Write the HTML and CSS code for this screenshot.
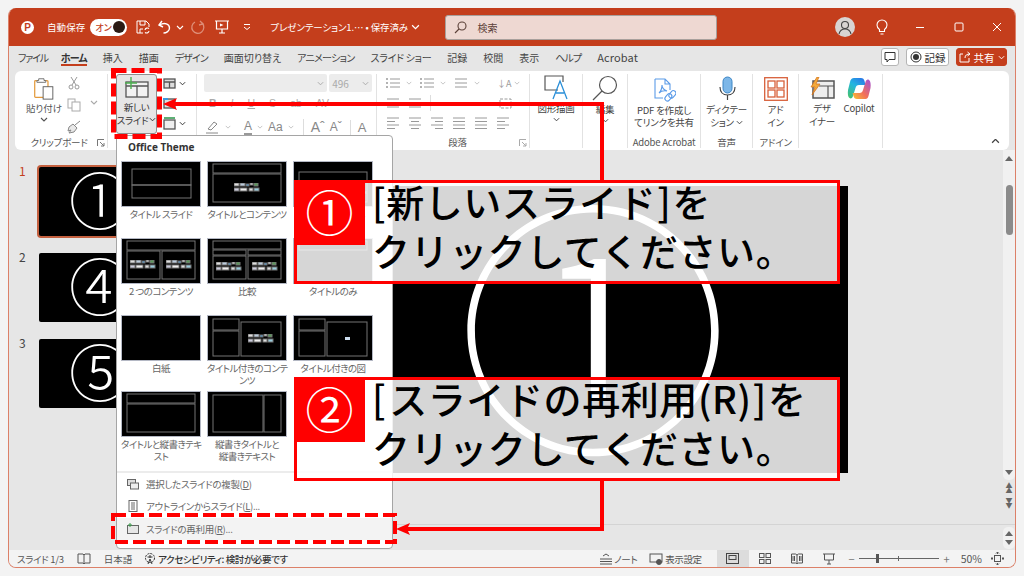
FILE: index.html
```html
<!DOCTYPE html>
<html lang="ja">
<head>
<meta charset="utf-8">
<title>PowerPoint</title>
<link rel="stylesheet" href="styles.css">
</head>
<body>
<svg class="defs" width="0" height="0" aria-hidden="true">
  <symbol id="chev" viewBox="0 0 8 5"><path d="M1 1l3 3 3-3" fill="none" stroke="currentColor" stroke-width="1.1"/></symbol>
  <symbol id="ci" viewBox="0 0 26 9">
    <rect x="0" y="0" width="5" height="3" fill="#ddd"/><rect x="6" y="0" width="5" height="3" fill="#bcd"/><rect x="12" y="1" width="3" height="2" fill="#4a9ad8"/><rect x="16" y="0" width="3" height="2" fill="#e8e8e8"/><rect x="20" y="0" width="4" height="3" fill="#5a9a5a"/>
    <rect x="0" y="5" width="5" height="3" fill="#ccd"/><rect x="6" y="5" width="7" height="3" fill="#eee"/><rect x="15" y="5" width="4" height="3" fill="#ddd"/><rect x="20" y="5" width="5" height="3" fill="#9cd"/>
  </symbol>
  <symbol id="lines" viewBox="0 0 14 14"><path d="M1 3h12M1 7h12M1 11h12" stroke="currentColor" fill="none"/></symbol>
  <symbol id="bullets" viewBox="0 0 14 14"><path d="M4 3h10M4 7h10M4 11h10" stroke="currentColor" fill="none"/><path d="M0 3h2M0 7h2M0 11h2" stroke="currentColor" stroke-width="1.6" fill="none"/></symbol>
  <symbol id="left" viewBox="0 0 14 14"><path d="M1 2h12M1 5.5h8M1 9h12M1 12.5h8" stroke="currentColor" fill="none"/></symbol>
  <symbol id="center" viewBox="0 0 14 14"><path d="M1 2h12M3 5.5h8M1 9h12M3 12.5h8" stroke="currentColor" fill="none"/></symbol>
  <symbol id="right" viewBox="0 0 14 14"><path d="M1 2h12M5 5.5h8M1 9h12M5 12.5h8" stroke="currentColor" fill="none"/></symbol>
  <symbol id="justify" viewBox="0 0 14 14"><path d="M1 2h12M1 5.5h12M1 9h12M1 12.5h12" stroke="currentColor" fill="none"/></symbol>
</svg>

<div class="window">
  <header class="titlebar">
    <span class="logo">P</span>
    <span class="autosave">自動保存</span>
    <span class="toggle"><span class="toggle-text">オン</span><span class="toggle-dot"></span></span>
    <svg class="ti save" width="16" height="16" viewBox="0 0 16 16" fill="none" stroke="#fff"><path d="M8 14H2V2h9l3 3v3"/><path d="M5 2v4h5V2M5 14v-4h3"/><path d="M10 11a2.500 2.500 0 0 1 4-1.500M14 12a2.500 2.500 0 0 1-4 1.500" stroke-width="1.100"/></svg>
    <svg class="ti undo" width="16" height="16" viewBox="0 0 16 16" fill="none" stroke="#fff" stroke-width="1.4"><path d="M5 2L2 6l4 2"/><path d="M2.500 6c5-3 10-1 10 3 0 3-3 5-6 5"/></svg>
    <svg class="ti qc" width="8" height="5"><use href="#chev"/></svg>
    <svg class="ti redo" width="16" height="16" viewBox="0 0 16 16" fill="none" stroke="#de8e78" stroke-width="1.3"><path d="M10 2l3 3-4 1"/><path d="M12 4A6 6 0 1 1 5 3"/></svg>
    <svg class="ti present" width="16" height="16" viewBox="0 0 16 16" fill="none" stroke="#fff" stroke-width="1.2"><path d="M1 2h14M2.500 2v8h11V2M8 10v4M5 14h6"/><path d="M6 4.500l3.500 1.500L6 7.500z" fill="#fff" stroke="none"/></svg>
    <svg class="ti more" width="8" height="6" viewBox="0 0 8 6" fill="none" stroke="#fff"><path d="M1 .5h6M1 3l3 2.500L7 3"/></svg>
    <span class="doc">プレゼンテーション1.… • 保存済み <svg width="9" height="6" class="doc-chev"><use href="#chev"/></svg></span>
    <div class="search">
      <svg width="13" height="13" viewBox="0 0 13 13" fill="none" stroke="#5b4038" stroke-width="1.1"><circle cx="8" cy="5" r="4"/><path d="M5 8l-4 4"/></svg>
      <span>検索</span>
    </div>
    <div class="win-right">
      <span class="avatar"><svg width="20" height="20" viewBox="0 0 20 20" fill="none" stroke="#444" stroke-width="1.1"><circle cx="10" cy="8" r="3.500"/><path d="M4 17c1-4 3-5 6-5s5 1 6 5"/></svg></span>
      <svg class="bulb" width="14" height="16" viewBox="0 0 14 16" fill="none" stroke="#fff" stroke-width="1.1"><path d="M4.500 10.500C3 9.500 2 8 2 6a5 5 0 0 1 10 0c0 2-1 3.500-2.500 4.500v2h-5z"/><path d="M5.500 15h3"/></svg>
      <svg class="w min" width="10" height="10" viewBox="0 0 10 10" stroke="#fff"><path d="M1 5.500h8"/></svg>
      <svg class="w max" width="10" height="10" viewBox="0 0 10 10" stroke="#fff" fill="none"><rect x="1" y="1" width="8" height="8" rx="1"/></svg>
      <svg class="w close" width="10" height="10" viewBox="0 0 10 10" stroke="#fff"><path d="M1 1l8 8M9 1l-8 8"/></svg>
    </div>
  </header>

  <nav class="tabs">
    <span class="tab k">ファイル</span><span class="tab k active">ホーム</span><span class="tab">挿入</span><span class="tab">描画</span><span class="tab k">デザイン</span><span class="tab s">画面切り替え</span><span class="tab k2">アニメーション</span><span class="tab k2">スライド ショー</span><span class="tab">記録</span><span class="tab">校閲</span><span class="tab">表示</span><span class="tab k">ヘルプ</span><span class="tab latin">Acrobat</span>
    <div class="tab-actions">
      <span class="tbtn comment"><svg width="12" height="12" viewBox="0 0 12 12" fill="none" stroke="#333"><path d="M1 1.500h10v7H5L3 11V8.500H1z"/></svg></span>
      <span class="tbtn rec"><svg width="12" height="12" viewBox="0 0 12 12"><circle cx="6" cy="6" r="5" fill="none" stroke="#333"/><circle cx="6" cy="6" r="3" fill="#333"/></svg>記録</span>
      <span class="tbtn share"><svg width="12" height="12" viewBox="0 0 12 12" fill="none" stroke="#fff"><path d="M4 3H1v8h9V7M6 7c0-3 2-4 5-4M8.500 1L11 3 8.500 5"/></svg>共有<svg width="7" height="5"><use href="#chev"/></svg></span>
    </div>
  </nav>

  <section class="ribbon">
    <div class="group g-clip">
      <div class="g-body clip-body">
        <div class="paste">
          <svg width="22" height="23" viewBox="0 0 24 26" fill="none"><rect x="1.500" y="4" width="15" height="19" rx="1" fill="#fff" stroke="#e39a3c" stroke-width="1.400"/><path d="M6 4V2h6v2h2v2H4V4z" fill="#fff" stroke="#666"/><rect x="11" y="11" width="11" height="14" fill="#fff" stroke="#555"/></svg>
          <span>貼り付け</span>
          <svg class="gc" width="8" height="5"><use href="#chev"/></svg>
        </div>
        <div class="clip-tools">
          <svg width="12" height="14" viewBox="0 0 12 14" fill="none" stroke="#999"><path d="M3 1l5 8M9 1L4 9"/><circle cx="3" cy="11" r="2"/><circle cx="9" cy="11" r="2"/></svg>
          <svg width="14" height="14" viewBox="0 0 14 14" fill="none" stroke="#aaa"><rect x="1" y="1" width="7" height="9"/><rect x="5" y="4" width="8" height="9" fill="#fff"/></svg>
          <svg width="14" height="14" viewBox="0 0 14 14" fill="#e8e8e8" stroke="#888"><path d="M13 1L8 5M2 7l4-3 4 4-3 4-5 1 2-3-3 1z"/></svg>
        </div>
        <svg class="clip-c" width="8" height="5"><use href="#chev"/></svg>
      </div>
      <div class="g-label">クリップボード<svg class="launch" width="8" height="8" viewBox="0 0 8 8" fill="none" stroke="#777"><path d="M.5 7V.5H7M3 3l4 4M7 4v3H4"/></svg></div>
    </div>

    <div class="group g-slides">
      <div class="newslide">
        <svg width="25" height="21" viewBox="0 0 25 21" fill="none"><rect x="2" y="5" width="22" height="15" fill="#f2f2f2" stroke="#555" stroke-width="1.300"/><path d="M2 9h22M13 9v11" stroke="#555" stroke-width="1.300"/><path d="M7 0v12M1 6h12" stroke="#4caf50" stroke-width="1.400"/></svg>
        <span>新しい</span>
        <span>スライド <svg width="7" height="5"><use href="#chev"/></svg></span>
      </div>
      <div class="slide-tools">
        <span><svg width="13" height="13" viewBox="0 0 13 13" fill="#ddd" stroke="#555" stroke-width="1.300"><rect x="1" y="2" width="11" height="9"/><path d="M6.500 5v6M1 5h11"/></svg><svg width="7" height="5"><use href="#chev"/></svg></span>
        <span><svg width="13" height="13" viewBox="0 0 13 13" fill="#ddd" stroke="#555" stroke-width="1.300"><rect x="1" y="2" width="11" height="9"/><path d="M0 2h5" stroke="#3d9ae0" stroke-width="2"/></svg></span>
        <span><svg width="13" height="13" viewBox="0 0 13 13" fill="#eee" stroke="#555" stroke-width="1.300"><rect x="1" y="3" width="11" height="9"/><path d="M1 1h11" stroke="#5db075" stroke-width="2"/></svg><svg width="7" height="5"><use href="#chev"/></svg></span>
      </div>
    </div>

    <div class="group g-font">
      <div class="g-body font-body">
        <div class="f-row"><span class="fld f1"><svg width="7" height="5"><use href="#chev"/></svg></span><span class="fld f2">496<svg width="7" height="5"><use href="#chev"/></svg></span></div>
        <div class="f-row fmt"><b>B</b><i>I</i><u>U</u><span>S</span><span>ab</span><span>AV</span></div>
        <div class="f-row tools">
          <svg width="15" height="14" viewBox="0 0 15 14" fill="none" stroke="#888"><path d="M3 9l6-7 3 2-6 6zM1 13h12"/></svg>
          <svg class="sc" width="6" height="4"><use href="#chev"/></svg>
          <span class="a-line">A</span>
          <svg class="sc" width="6" height="4"><use href="#chev"/></svg>
          <span>Aa</span>
          <svg class="sc" width="6" height="4"><use href="#chev"/></svg>
          <span class="bigA">Aˆ</span><span>Aˇ</span><span class="clr">A</span>
        </div>
      </div>
    </div>

    <div class="group g-para">
      <div class="g-body para-body">
        <div class="p-row r1">
          <svg width="14" height="14"><use href="#bullets"/></svg><svg class="pc" width="6" height="4"><use href="#chev"/></svg>
          <svg width="14" height="14"><use href="#bullets"/></svg><svg class="pc" width="6" height="4"><use href="#chev"/></svg>
          <svg width="14" height="14"><use href="#lines"/></svg><svg class="pc" width="6" height="4"><use href="#chev"/></svg>
          <span class="p-txt">↓A</span><svg class="pc" width="6" height="4"><use href="#chev"/></svg>
        </div>
        <div class="p-row r2">
          <svg width="14" height="14"><use href="#lines"/></svg><svg width="14" height="14"><use href="#lines"/></svg>
          <span class="p-div"></span>
          <svg class="p-box" width="13" height="13" viewBox="0 0 13 13" fill="none" stroke="currentColor" stroke-dasharray="3 1.500"><rect x="1" y="2" width="11" height="9"/></svg>
        </div>
        <div class="p-row r3">
          <svg width="14" height="14"><use href="#left"/></svg><svg width="14" height="14"><use href="#center"/></svg><svg width="14" height="14"><use href="#right"/></svg><svg width="14" height="14"><use href="#justify"/></svg><svg width="14" height="14"><use href="#justify"/></svg><svg width="14" height="14"><use href="#left"/></svg>
        </div>
      </div>
      <div class="g-label">段落<svg class="launch" width="8" height="8" viewBox="0 0 8 8" fill="none" stroke="#aaa"><path d="M.5 7V.5H7M3 3l4 4M7 4v3H4"/></svg></div>
    </div>

    <div class="group big g-draw">
      <svg width="24" height="25" viewBox="0 0 24 25" fill="none"><path d="M14 15H1V1h18v6" stroke="#555" stroke-width="1.200"/><path d="M9 24L16 6l7 18M12 18h8" stroke="#2a8fd8" stroke-width="1.300"/></svg>
      <span class="bt">図形描画</span>
      <svg class="bc" width="7" height="5"><use href="#chev"/></svg>
    </div>
    <div class="group big g-edit">
      <svg width="26" height="26" viewBox="0 0 26 26" fill="none" stroke="#555" stroke-width="1.200"><circle cx="16" cy="10" r="8.500"/><path d="M10 16L1 25"/></svg>
      <span class="bt">編集</span>
      <svg class="bc" width="7" height="5"><use href="#chev"/></svg>
    </div>
    <div class="group big g-acro">
      <svg width="24" height="26" viewBox="0 0 24 26" fill="none" stroke="#5b9be8" stroke-width="1.100"><path d="M3 1h10l5 5v6M3 1v19h8M13 1v5h5"/><path d="M7 15c2-2 3-5 3-8 0 3 2 5 5 6-3-.5-6 0-8 2z"/><rect x="14" y="15" width="5" height="8" rx="2.500" transform="rotate(40 16 19)"/><rect x="18" y="12" width="5" height="8" rx="2.500" transform="rotate(40 20 16)"/></svg>
      <span class="bt two acro-t">PDF を作成し<br>てリンクを共有</span>
      <span class="g-label">Adobe Acrobat</span>
    </div>
    <div class="group big g-voice">
      <svg width="18" height="25" viewBox="0 0 18 25" fill="none"><rect x="5" y="1" width="9" height="16" rx="4.500" fill="#7db7e8" stroke="#3d86c6"/><path d="M2 11c0 5 3 8 7.500 8S17 16 17 11M9.500 19v5" stroke="#444" stroke-width="1.200"/></svg>
      <span class="bt two">ディクテー<br>ション <svg class="in" width="7" height="5"><use href="#chev"/></svg></span>
      <span class="g-label">音声</span>
    </div>
    <div class="group big g-addin">
      <svg width="24" height="24" viewBox="0 0 24 24" fill="none" stroke="#d8603a" stroke-width="1.300"><rect x=".7" y=".7" width="22.600" height="22.600"/><rect x="4" y="4" width="7" height="7"/><rect x="13" y="4" width="7" height="7"/><rect x="4" y="13" width="7" height="7"/><rect x="13" y="13" width="7" height="7"/></svg>
      <span class="bt two">アド<br>イン</span>
      <span class="g-label">アドイン</span>
    </div>
    <div class="group g-ai">
      <div class="big ai-item">
        <svg width="25" height="23" viewBox="0 0 25 23" fill="none"><rect x="3" y="4" width="21" height="17" fill="#eee" stroke="#555" stroke-width="1.500"/><path d="M9 9h15M18 9v12" stroke="#555" stroke-width="1.200"/><path d="M7 0L1 10h4l-3 8 8-11H6l3-7z" fill="#f2a93b" stroke="#d3701b" stroke-width=".7"/></svg>
        <span class="bt two">デザ<br>イナー</span>
      </div>
      <div class="big ai-item cop">
        <svg width="24" height="23" viewBox="0 0 24 23">
          <defs>
            <linearGradient id="cg1" x1=".7" y1="0" x2=".1" y2="1"><stop offset="0" stop-color="#2a7de8"/><stop offset=".4" stop-color="#22b6e0"/><stop offset="1" stop-color="#45c26a"/></linearGradient>
            <linearGradient id="cg2" x1="0" y1="1" x2="1" y2="0"><stop offset="0" stop-color="#f5c52e"/><stop offset=".45" stop-color="#f2705a"/><stop offset="1" stop-color="#a24fd8"/></linearGradient>
          </defs>
          <path d="M7 1h7c2 0 3 1 3.500 3l1 4H12c-2 0-3 1-3.500 3L6 19c-.5 2-2 3-3.500 2C1 20 .5 17 1 13L3 5c.5-2.500 2-4 4-4z" fill="url(#cg1)"/>
          <path d="M17 22h-7c-2 0-3-1-3.500-3l-1-3h7c2 0 3-1 3.500-3l2.500-8c.5-2 2-3 3.500-2 1.500 1 2 4 1.500 8l-2 8c-.5 2.500-2 3-4 3z" fill="url(#cg2)"/>
        </svg>
        <span class="bt">Copilot</span>
      </div>
    </div>
    <svg class="collapse" width="9" height="6"><use href="#chev" transform="matrix(1 0 0 -1 0 5)"/></svg>
  </section>

  <main class="work">
    <aside class="rail">
      <div class="t-row sel"><span class="t-num">1</span><div class="thumb"><span class="glyph">①</span></div></div>
      <div class="t-row"><span class="t-num">2</span><div class="thumb"><span class="glyph">④</span></div></div>
      <div class="t-row"><span class="t-num">3</span><div class="thumb"><span class="glyph">⑤</span></div></div>
    </aside>
    <div class="center">
      <div class="editor">
        <div class="slide"><span class="slide-glyph">①</span></div>
        <div class="vscroll">
          <div class="track">
            <span class="tri up"></span>
            <span class="vthumb"></span>
            <span class="tri down"></span>
          </div>
          <div class="pager"><span class="dbl">▲<br>▲</span><span class="dbl">▼<br>▼</span></div>
        </div>
      </div>
      <div class="notes">
        <div class="mini"><span class="tri up"></span><span class="tri down"></span></div>
      </div>
    </div>
  </main>

  <footer class="status">
    <span class="st-count">スライド 1/3</span>
    <svg class="st-book" width="14" height="12" viewBox="0 0 14 12" fill="none" stroke="#555"><path d="M1 1h5l1 1 1-1h5v9H8l-1 1-1-1H1zM7 2v9"/></svg>
    <span class="st-lang">日本語</span>
    <svg class="st-acc" width="14" height="14" viewBox="0 0 14 14" fill="none" stroke="#333"><circle cx="7" cy="6" r="4.500" stroke-dasharray="2 1"/><path d="M7 3v3M4.500 5h5M5 12l2-5 2 5"/></svg>
    <span class="st-a11y">アクセシビリティ: 検討が必要です</span>
    <div class="st-right">
      <span class="st-item"><svg width="14" height="12" viewBox="0 0 14 12" fill="none" stroke="#555"><path d="M4 3l3-2 3 2M1 6h12M1 8.500h12M1 11h12"/></svg>ノート</span>
      <span class="st-item st-disp"><svg width="15" height="12" viewBox="0 0 15 12" fill="none" stroke="#555"><rect x="1" y="1" width="12" height="8"/><circle cx="10" cy="9" r="2.500" fill="#555"/></svg>表示設定</span>
      <span class="view on"><svg width="13" height="11" viewBox="0 0 13 11" fill="none" stroke="#444"><rect x=".5" y=".5" width="12" height="10"/><rect x="3" y="2.500" width="7" height="4"/></svg></span>
      <span class="view"><svg width="12" height="11" viewBox="0 0 12 11" fill="none" stroke="#555"><rect x=".5" y=".5" width="4.500" height="4"/><rect x="7" y=".5" width="4.500" height="4"/><rect x=".5" y="6.500" width="4.500" height="4"/><rect x="7" y="6.500" width="4.500" height="4"/></svg></span>
      <span class="view"><svg width="12" height="11" viewBox="0 0 12 11" fill="none" stroke="#555"><path d="M.5 1h4l1.500 1 1.500-1h4v9h-4L6 11l-1.500-1h-4zM6 2v9M2 3v5M3.500 3v5M8.500 3v5M10 3v5"/></svg></span>
      <span class="view"><svg width="12" height="12" viewBox="0 0 12 12" fill="none" stroke="#555"><path d="M0 1h12M1.500 1v6h9V1M6 7v4M4 11h4"/></svg></span>
      <span class="zm">−</span>
      <span class="zslider"><span class="zthumb"></span><span class="ztick"></span></span>
      <span class="zm">+</span>
      <span class="zpct">50%</span>
      <svg class="zfit" width="13" height="13" viewBox="0 0 13 13" fill="none" stroke="#555"><rect x="3.500" y="3.500" width="6" height="6"/><path d="M6.500 0v2M5 1.500L6.500 0 8 1.500M6.500 13v-2M5 11.500L6.500 13 8 11.500M0 6.500h2M1.500 5L0 6.500 1.500 8M13 6.500h-2M11.500 5L13 6.500 11.500 8"/></svg>
    </div>
  </footer>
</div>

<div class="menu">
  <div class="menu-title">Office Theme</div>
  <div class="gallery">
    <figure><svg viewBox="0 0 80 46"><rect x="11" y="8" width="59" height="16"/><rect x="11" y="24" width="59" height="13"/></svg><figcaption>タイトル スライド</figcaption></figure>
    <figure><svg viewBox="0 0 80 46"><rect x="6" y="3" width="68" height="9"/><rect x="6" y="13" width="68" height="28"/><use href="#ci" x="27" y="22" width="26" height="9"/></svg><figcaption>タイトルとコンテンツ</figcaption></figure>
    <figure><svg viewBox="0 0 80 46"><rect x="6" y="11" width="68" height="20"/><rect x="6" y="32" width="68" height="9"/></svg><figcaption>セクション見出し</figcaption></figure>
    <figure><svg viewBox="0 0 80 46"><rect x="6" y="3" width="68" height="9"/><rect x="6" y="13" width="33" height="28"/><rect x="41" y="13" width="33" height="28"/><use href="#ci" x="9" y="22" width="26" height="9"/><use href="#ci" x="45" y="22" width="26" height="9"/></svg><figcaption>2 つのコンテンツ</figcaption></figure>
    <figure><svg viewBox="0 0 80 46"><rect x="6" y="3" width="68" height="8"/><rect x="6" y="12" width="33" height="5"/><rect x="41" y="12" width="33" height="5"/><rect x="6" y="18" width="33" height="23"/><rect x="41" y="18" width="33" height="23"/><use href="#ci" x="9" y="24" width="26" height="9"/><use href="#ci" x="45" y="24" width="26" height="9"/></svg><figcaption>比較</figcaption></figure>
    <figure><svg viewBox="0 0 80 46"><rect x="6" y="3" width="68" height="9"/></svg><figcaption>タイトルのみ</figcaption></figure>
    <figure><svg viewBox="0 0 80 46"></svg><figcaption>白紙</figcaption></figure>
    <figure><svg viewBox="0 0 80 46"><rect x="6" y="4" width="26" height="11"/><rect x="6" y="16" width="26" height="25"/><rect x="34" y="7" width="40" height="34"/><use href="#ci" x="41" y="19" width="26" height="9"/></svg><figcaption>タイトル付きのコンテ<br>ンツ</figcaption></figure>
    <figure><svg viewBox="0 0 80 46"><rect x="6" y="4" width="26" height="11"/><rect x="6" y="16" width="26" height="25"/><rect x="34" y="7" width="40" height="34"/><rect x="52" y="22" width="5" height="3" fill="#cde" stroke="none"/></svg><figcaption>タイトル付きの図</figcaption></figure>
    <figure><svg viewBox="0 0 80 46"><rect x="6" y="3" width="68" height="9"/><rect x="6" y="13" width="68" height="28"/></svg><figcaption>タイトルと縦書きテキ<br>スト</figcaption></figure>
    <figure><svg viewBox="0 0 80 46"><rect x="6" y="4" width="50" height="37"/><rect x="57" y="4" width="17" height="37"/></svg><figcaption>縦書きタイトルと<br>縦書きテキスト</figcaption></figure>
  </div>
  <div class="menu-items">
    <div class="mi"><svg width="12" height="11" viewBox="0 0 12 11" fill="none" stroke="#666"><rect x=".5" y=".5" width="8" height="6" fill="#ddd"/><rect x="3.500" y="4" width="8" height="6" fill="#eee"/></svg><span>選択したスライドの複製(<u>D</u>)</span></div>
    <div class="mi"><svg width="12" height="12" viewBox="0 0 12 12" fill="none" stroke="#666"><rect x="2" y=".5" width="8" height="11"/><path d="M4 3h4M4 5h4M4 7h4M4 9h4"/></svg><span>アウトラインからスライド(<u>L</u>)...</span></div>
    <div class="mi hot"><svg width="12" height="11" viewBox="0 0 12 11" fill="none" stroke="#666"><rect x=".5" y="2.500" width="11" height="8" fill="#e6e6e6"/><path d="M3 0v4M1 2h4" stroke="#3a9a4a"/></svg><span>スライドの再利用(<u>R</u>)...</span></div>
  </div>
</div>

<svg class="arrows" width="1024" height="576" viewBox="0 0 1024 576" fill="none">
  <rect class="dashrect thick" x="113.500" y="70.500" width="46" height="66"/>
  <rect class="dashrect" x="113" y="515" width="282" height="27"/>
  <path d="M174 104H602V181" stroke="#f00" stroke-width="4"/>
  <path d="M602 480V529H406" stroke="#f00" stroke-width="4"/>
  <path d="M163 104l14-6-3 6 3 6z" fill="#f00"/>
  <path d="M396 529l14-6-3 6 3 6z" fill="#f00"/>
</svg>

<div class="callout c1">
  <span class="c-num">①</span>
  <p>[新しいスライド<span class="rb">]</span>を<br>クリックしてください。</p>
</div>
<div class="callout c2">
  <span class="c-num">②</span>
  <p>[<span class="lb">スライドの再利用(R)</span><span class="rb">]</span>を<br>クリックしてください。</p>
</div>
</body>
</html>
```
FILE: styles.css
```css
* { box-sizing: border-box; }
html, body { margin: 0; padding: 0; }
body {
  position: relative;
  width: 1024px;
  height: 576px;
  overflow: hidden;
  background: #f3f3f3;
  font-family: "Noto Sans CJK JP", "Noto Sans", sans-serif;
  font-feature-settings: "palt";
  font-size: 10px;
  color: #444;
}
svg { display: block; flex: none; }
svg.in { display: inline-block; vertical-align: 1px; }
.defs { position: absolute; }

.window {
  margin: 8px;
  width: 1008px;
  height: 560px;
  display: flex;
  flex-direction: column;
  background: #e6e6e6;
  border: 1px solid #dc8068;
  border-top: 0;
  border-radius: 8px;
  overflow: hidden;
}

/* title bar */
.titlebar {
  height: 38px;
  flex: none;
  margin: 0 -1px;
  background: #c43e1c;
  display: flex;
  align-items: center;
  color: #fff;
  padding-left: 13px;
}
.logo {
  width: 13px; height: 13px; border-radius: 50%;
  background: #fff; color: #c43e1c;
  font: 700 10px/13px "Liberation Sans", sans-serif;
  text-align: center;
}
.autosave { margin-left: 13px; font-size: 9.500px; letter-spacing: .1px; }
.toggle {
  margin-left: 5px; width: 37px; height: 17px; border-radius: 9px;
  background: #fff; display: flex; align-items: center; justify-content: space-between;
  padding: 0 2px 0 5px; color: #c43e1c; font-size: 9px; font-weight: 500;
}
.toggle-dot { width: 12px; height: 12px; border-radius: 50%; background: #2b1a14; }
.ti.save { margin-left: 8px; }
.ti.undo { margin-left: 6px; }
.ti.qc { margin-left: 3px; color: #fff; }
.ti.redo { margin-left: 6px; }
.ti.present { margin-left: 8px; }
.ti.more { margin-left: 13px; }
.doc { margin-left: 19px; width: 150px; font-size: 9.500px; letter-spacing: -.1px; display: flex; align-items: center; justify-content: space-between; white-space: pre; }
.doc-chev { color: #fff; }
.search {
  margin-left: 25px;
  width: 272px; height: 25px;
  background: #eed8d2;
  border: 1px solid #a8a09c;
  border-radius: 3px;
  display: flex; align-items: center; gap: 10px;
  padding-left: 8px;
  color: #5b4038;
  font-size: 10px;
}
.win-right { margin-left: auto; display: flex; align-items: center; padding-right: 14px; }
.avatar { width: 20px; height: 20px; border-radius: 50%; background: #d8d4d2; }
.bulb { margin-left: 20px; }
.w.min { margin-left: 26px; }
.w.max { margin-left: 29px; }
.w.close { margin-left: 28px; }

/* tabs */
.tabs {
  height: 24px; flex: none;
  display: flex; align-items: center; gap: 16px;
  padding: 0 8px 2px 9px;
  font-size: 10px; color: #444; white-space: pre;
}
.tab.k { letter-spacing: -.9px; }
.tab.k2 { letter-spacing: -.7px; }
.tab.k2 + .tab.k2 { letter-spacing: -.3px; }
.tab.s { letter-spacing: 0; }
.tab:first-child { margin-right: -3px; letter-spacing: -1.2px; }
.tab.latin { font-size: 11px; letter-spacing: .1px; }
.tab.active { position: relative; font-weight: 700; color: #333; }
.tab.active::after {
  content: ""; position: absolute; left: 0; right: 0; bottom: -1px;
  height: 2px; background: #c43e1c;
}
.tab-actions { margin-left: auto; display: flex; gap: 7px; }
.tbtn {
  height: 18px; display: flex; align-items: center; justify-content: center; gap: 3px;
  background: #fff; border: 1px solid #b5b5b5; border-radius: 3px; font-size: 10.5px; color: #333;
}
.comment { width: 18px; }
.rec { width: 43px; }
.share { width: 51px; background: #c43e1c; border-color: #c43e1c; color: #fff; }

/* ribbon */
.ribbon {
  height: 79px; flex: none;
  margin: 1px 6px 0;
  background: #fff;
  border-radius: 6px;
  display: flex;
  position: relative;
}
.group {
  margin: 3px 0 2px;
  border-right: 1px solid #e2e2e2;
  display: flex;
  flex-direction: column;
  position: relative;
  color: #555;
}
.g-body { flex: 1; }
.g-label { font-size: 9.5px; line-height: 12px; text-align: center; color: #555; white-space: nowrap; letter-spacing: -.2px; }
.launch { position: absolute; right: 2px; bottom: 1px; }

.g-clip { width: 93px; }
.clip-body { display: flex; padding-left: 11px; position: relative; }
.paste { width: 36px; display: flex; flex-direction: column; align-items: center; font-size: 9.5px; white-space: nowrap; padding-top: 3px; }
.paste span { margin-top: 2px; line-height: 12px; }
.gc { margin-top: 3px; }
.clip-tools { margin-left: 5px; display: flex; flex-direction: column; gap: 8px; padding-top: 2px; align-items: center; }
.clip-c { margin: 26px 0 0 9px; color: #aaa; }
.g-clip .g-label { padding-right: 4px; }

.g-slides { width: 89px; flex-direction: row; padding-left: 8px; gap: 6px; }
.newslide {
  width: 41px; height: 60px;
  background: #e6e6e6; border: 1px solid #8f8f8f; border-radius: 3px;
  display: flex; flex-direction: column; align-items: center;
  font-size: 9.5px; line-height: 13px; color: #333; white-space: nowrap;
  padding-top: 2px;
}
.newslide svg:first-child { margin-bottom: 3px; }
.newslide span { display: flex; align-items: center; gap: 1px; letter-spacing: -.3px; }
.slide-tools { display: flex; flex-direction: column; gap: 7px; padding-top: 3px; }
.slide-tools span { display: flex; align-items: center; gap: 3px; height: 13px; color: #333; }

.g-font { width: 180px; padding: 0 4px 0 7px; }
.f-row { display: flex; align-items: center; }
.fld { height: 18px; background: #ececec; border-radius: 2px; display: flex; align-items: center; justify-content: flex-end; padding-right: 3px; color: #aaa; }
.f1 { width: 124px; }
.f2 { width: 43px; margin-left: 2px; justify-content: space-between; padding-left: 3px; font-size: 10px; }
.fmt { margin-top: 3px; height: 16px; gap: 14px; padding-left: 5px; color: #aaa; font-size: 10.5px; font-family: "Liberation Sans", sans-serif; }
.tools { margin-top: 7px; height: 18px; gap: 5px; color: #888; font-size: 12px; padding-left: 1px; font-family: "Liberation Sans", sans-serif; }
.a-line { border-bottom: 2px solid #999; line-height: 13px; margin-left: 8px; }
.sc { color: #bbb; }
.bigA { font-size: 14px; margin-left: 4px; padding-left: 7px; border-left: 1px solid #ddd; }
.clr { font-size: 13px; margin-left: 3px; padding-left: 7px; border-left: 1px solid #ddd; }

.g-para { width: 153px; padding-left: 9px; }
.p-row { display: flex; align-items: center; color: #9a9a9a; height: 14px; }
.para-body { padding-top: 2px; display: flex; flex-direction: column; gap: 6px; }
.r1 .pc { margin: 0 8px 0 6px; color: #bbb; }
.p-row.r2 { gap: 8px; }
.p-row.r3 { gap: 8px; }
.p-txt { margin: 0 -3px 0 9px; font-size: 9px; }
.p-div { width: 1px; height: 16px; background: #ddd; }
.p-box { margin-left: 60px; }

.big { display: flex; flex-direction: column; align-items: center; font-size: 9.5px; line-height: 12px; color: #444; }
.big .bt { margin-top: 2px; text-align: center; white-space: nowrap; letter-spacing: -.2px; }
.big .bc { margin-top: 3px; }
.big .bt.two { line-height: 13px; }
.big .bt.acro-t { line-height: 12px; margin-top: 0; }
.big .g-label { margin-top: auto; }
.g-draw { width: 53px; padding-top: 1px; }
.g-edit { width: 45px; padding-top: 1px; }
.g-acro { width: 73px; padding-top: 4px; }
.g-voice { width: 52px; padding-top: 2px; }
.g-addin { width: 46px; padding-top: 3px; }
.g-ai { width: 84px; flex-direction: row; padding: 3px 0 0 9px; gap: 7px; }
.ai-item { width: 28px; }
.cop { width: 32px; }
.collapse { position: absolute; right: 9px; bottom: 5px; color: #444; }

/* work area */
.work { flex: 1; min-height: 0; display: flex; }
.rail { width: 322px; padding-top: 17px; display: flex; flex-direction: column; gap: 17px; flex: none; }
.t-row { display: flex; }
.t-num { width: 30px; height: 14px; margin-top: -3px; padding-left: 10px; font-size: 12px; line-height: 14px; color: #444; }
.sel .t-num { color: #c43e1c; }
.thumb {
  width: 122px; height: 69px; background: #000; border-radius: 2px;
  display: flex; align-items: center; justify-content: center; color: #fff;
}
.sel .thumb { box-shadow: 0 0 0 2px #c4603f; }
.glyph { font-size: 62px; line-height: 63px; font-weight: 300; height: 69px; }

.center { flex: 1; display: flex; flex-direction: column; min-width: 0; }
.editor { height: 374px; flex: none; display: flex; padding-left: 7px; justify-content: space-between; }
.slide {
  width: 510px; height: 287px; margin-top: 36px; background: #000;
  display: flex; align-items: center; justify-content: center;
}
.slide-glyph { color: #fff; font-size: 272px; line-height: 259px; height: 287px; font-weight: 300; }
.vscroll { width: 12px; display: flex; flex-direction: column; align-items: center; }
.track { width: 100%; height: 330px; background: #f1f1f1; border-radius: 0 0 5px 5px; display: flex; flex-direction: column; align-items: center; padding: 6px 0 5px; }
.tri { width: 0; height: 0; border-left: 4px solid transparent; border-right: 4px solid transparent; flex: none; }
.tri.up { border-bottom: 5px solid #666; }
.tri.down { border-top: 5px solid #666; }
.vthumb { width: 7px; height: 50px; margin-top: 24px; background: #8b8b8b; border-radius: 4px; }
.track .down { margin-top: auto; }
.pager { display: flex; flex-direction: column; align-items: center; gap: 5px; padding-top: 3px; }
.dbl { font-size: 7px; line-height: 5px; color: #666; text-align: center; display: block; }
.notes { flex: 1; border-top: 1px solid #d4d4d4; display: flex; justify-content: flex-end; }
.mini { width: 12px; height: 22px; margin-top: 2px; background: #f1f1f1; border-radius: 5px; display: flex; flex-direction: column; align-items: center; justify-content: space-around; padding: 2px 0; }

/* status bar */
.status {
  height: 17px; flex: none;
  background: #f3f3f3;
  display: flex; align-items: center;
  padding-left: 8px;
  font-size: 9.5px; color: #555; white-space: pre;
}
.st-count { letter-spacing: -.3px; }
.st-book { margin-left: 13px; }
.st-lang { margin-left: 13px; }
.st-acc { margin-left: 11px; }
.st-a11y { margin-left: 1px; color: #333; font-weight: 500; letter-spacing: -.4px; }
.st-right { margin-left: auto; display: flex; align-items: center; height: 100%; padding-right: 11px; }
.st-item { display: flex; align-items: center; gap: 1px; letter-spacing: -.4px; }
.st-disp { margin-left: 12px; margin-right: 15px; }
.view { width: 32px; height: 100%; display: flex; align-items: center; justify-content: center; }
.view.on { background: #dcdcdc; }
.zm { margin-left: 3px; color: #777; font-size: 11px; width: 8px; text-align: center; }
.zslider { position: relative; width: 80px; height: 1px; margin: 0 2px 0 3px; background: #666; }
.zthumb { position: absolute; left: 17px; top: -4px; width: 3px; height: 9px; background: #555; }
.ztick { position: absolute; left: 39px; top: -2px; width: 1px; height: 5px; background: #666; }
.zslider + .zm { margin-left: 2px; }
.zpct { margin-left: 10px; font-size: 10.5px; }
.zfit { margin-left: 9px; }

/* insert-slide menu */
.menu {
  position: absolute; left: 116px; top: 135px;
  width: 277px; height: 414px;
  background: #fff;
  border: 1px solid #a5a5a5;
  border-radius: 4px;
  display: flex; flex-direction: column;
}
.menu-title { height: 25px; padding: 3px 0 0 11px; font: 700 10px/16px "Open Sans", "Noto Sans", sans-serif; color: #333; }
.gallery {
  flex: 1;
  display: grid;
  grid-template-columns: repeat(3, 80px);
  grid-auto-rows: 76.8px;
  column-gap: 6px;
  padding-left: 4px;
  border-bottom: 2px solid #ececec;
  overflow: hidden;
}
.gallery figure { margin: 0; }
.gallery svg {
  width: 80px; height: 46px; background: #000;
  outline: 1px solid #b4b8c4; outline-offset: -1px;
  fill: none; stroke: #747474; stroke-width: 1;
}
.gallery figcaption { margin-top: 1px; font-size: 9.5px; line-height: 12px; text-align: center; color: #666; white-space: nowrap; letter-spacing: -.55px; }
.menu-items { flex: none; height: 75px; display: flex; flex-direction: column; padding-bottom: 8px; }
.mi { flex: 1; display: flex; align-items: center; gap: 7px; padding-left: 10px; font-size: 9.5px; color: #666; white-space: nowrap; letter-spacing: -.3px; }
.mi.hot { background: #f3f3f3; }

/* annotation overlays */
.arrows { position: absolute; left: 0; top: 0; pointer-events: none; }
.dashrect { stroke: #f00; stroke-width: 4; stroke-dasharray: 13 5; fill: none; }
.dashrect.thick { stroke-width: 5; }

.callout {
  position: absolute; left: 294px; width: 546px; height: 104px;
  border: 3px solid #f00;
  background: rgba(255, 255, 255, .84);
  display: flex;
}
.c1 { top: 180px; }
.c2 { top: 377px; }
.c-num {
  width: 71px; height: 65px; margin: -3px 0 0 -3px; flex: none;
  background: #f00; color: #fff;
  font-size: 48px; line-height: 60px; text-align: center; letter-spacing: 0;
}
.callout p {
  margin: -7px 0 0 7px;
  font-size: 38px; line-height: 49px; font-weight: 500; color: #000;
  white-space: nowrap;
  font-feature-settings: normal;
  letter-spacing: .6px;
}
.rb { margin: 0 1px 0 1px; }
.lb { margin-left: 3px; margin-right: 0; }
```
